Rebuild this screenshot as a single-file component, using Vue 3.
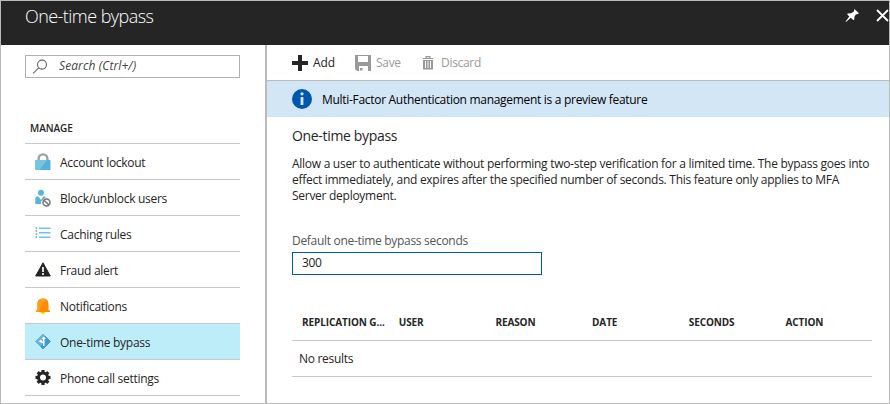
<script setup>
import { ref } from 'vue'

const seconds = ref('300')
const items = [
  { label: 'Account lockout', icon: 'lock' },
  { label: 'Block/unblock users', icon: 'block' },
  { label: 'Caching rules', icon: 'list' },
  { label: 'Fraud alert', icon: 'alert' },
  { label: 'Notifications', icon: 'bell' },
  { label: 'One-time bypass', icon: 'bypass', active: true },
  { label: 'Phone call settings', icon: 'gear' },
]
const columns = ['REPLICATION G...', 'USER', 'REASON', 'DATE', 'SECONDS', 'ACTION']
const teeth = [0, 45, 90, 135, 180, 225, 270, 315]
</script>

<template>
  <div class="window">
    <header class="titlebar">
      <h1>One-time bypass</h1>
      <div class="controls">
        <svg width="15" height="15" viewBox="0 0 15 15">
          <path d="M9.3 1 14 5.2 12.7 6 10.8 6.5 9.4 8.8 9.2 11.8 8.3 12 5.7 9.7 1 14 .6 13.5 4.3 8.6 2.2 6.3 2.7 5.5 6.2 5.3 8.9 3.5Z" fill="#fff" />
        </svg>
        <svg class="close" width="13" height="13" viewBox="0 0 13 13">
          <path d="M1 1 12 12M12 1 1 12" stroke="#fff" stroke-width="1.8" />
        </svg>
      </div>
    </header>

    <div class="body">
      <aside class="sidebar">
        <label class="search">
          <svg width="16" height="16" viewBox="0 0 16 16" fill="none" stroke="#666" stroke-width="1.1">
            <circle cx="10" cy="5.6" r="4.5" />
            <path d="M6.8 8.8 1 14.4" />
          </svg>
          <span>Search (Ctrl+/)</span>
        </label>
        <h2>MANAGE</h2>
        <nav>
          <a v-for="item in items" :key="item.icon" class="item" :class="{ active: item.active }">
            <svg width="16" height="18" viewBox="0 0 16 18">
              <g v-if="item.icon === 'lock'">
                <path d="M3.6 8V5.8a4.4 4.4 0 0 1 8.8 0V8" fill="none" stroke="#9fa1a2" stroke-width="2.4" />
                <rect x=".3" y="7" width="15.2" height="10" rx=".8" fill="#53b1dc" />
                <path d="M1.1 7H12L4.5 17H1.1a.8.8 0 0 1-.8-.8V7.8a.8.8 0 0 1 .8-.8Z" fill="#75c4e2" />
              </g>
              <g v-else-if="item.icon === 'block'">
                <circle cx="6" cy="3.8" r="3" fill="#59b4d9" />
                <path d="M.3 15V9.4Q.3 7.6 2.2 7.6h1.2L6 11l2.4-3.4h1.4l1 .7L6 12.5V15Z" fill="#59b4d9" />
                <circle cx="11.5" cy="13.6" r="3.5" fill="#fff" stroke="#777" stroke-width="1.5" />
                <path d="m9.1 11.2 4.8 4.8" stroke="#777" stroke-width="1.5" />
              </g>
              <g v-else-if="item.icon === 'list'" stroke="#74c3e6" stroke-width="1.5">
                <path d="M4 3.3h11.5M4 7.8h11.5M4 12.3h11.5" />
                <path d="M1.3 2v12" stroke-width="1.6" stroke-dasharray="2 1" />
              </g>
              <g v-else-if="item.icon === 'alert'">
                <path d="M8 1.8 15.3 15H.7Z" fill="#252525" stroke="#252525" stroke-linejoin="round" />
                <path d="M8 6v5" stroke="#fff" stroke-width="1.7" />
                <circle cx="8" cy="13" r="1.1" fill="#fff" />
              </g>
              <g v-else-if="item.icon === 'bell'">
                <path d="M5.5 14h5Q10.5 17 8 17t-2.5-3Z" fill="#ffca00" />
                <path d="M8 1.5c4.200 0 5.500 2.800 5.500 5.500v5.500L15 14v1H1v-1l1.500-1.500V7C2.500 4.300 3.800 1.500 8 1.500Z" fill="#ff8c00" />
                <path d="M8 1.500c1.700 0 2.700.3 3.600 1L6 9 4 15H1v-1l1.500-1.500V7C2.500 4.300 3.800 1.500 8 1.500Z" fill="#ff9d22" />
              </g>
              <g v-else-if="item.icon === 'bypass'">
                <path d="m8 1 7.500 7.500L8 16 .5 8.500Z" fill="#3e9bcb" stroke="#3e9bcb" stroke-linejoin="round" />
                <path d="M8 1 10 3 5.500 13.500.5 8.500Z" fill="#67b5d9" stroke="#67b5d9" stroke-linejoin="round" />
                <path d="M8.800 13V5M8.800 10 5.500 8" fill="none" stroke="#fff" stroke-width="1.500" />
                <path d="M6.600 6 8.800 3.500 11 6ZM3.600 8.200 6.500 6.500v3.500Z" fill="#fff" />
              </g>
              <g v-else transform="translate(8 8.500)" fill="#252525">
                <rect v-for="a in teeth" :key="a" x="-1.600" y="-7.500" width="3.200" height="4" :transform="`rotate(${a})`" />
                <circle r="4.500" fill="none" stroke="#252525" stroke-width="3" />
              </g>
            </svg>
            <span>{{ item.label }}</span>
          </a>
        </nav>
      </aside>

      <main class="content">
        <div class="toolbar">
          <button class="add">
            <svg width="16" height="16" viewBox="0 0 16 16"><path d="M8 0v16M0 8h16" stroke="#252525" stroke-width="4" /></svg>
            <span>Add</span>
          </button>
          <button class="save" disabled>
            <svg width="16" height="16" viewBox="0 0 16 16">
              <path fill="#999" fill-rule="evenodd" d="M0 0h16v16h-3v-5H4v5H2L0 14ZM3 1v6h10V1Z" />
              <path fill="#999" d="M5 13h2.500v2.500H5Z" />
            </svg>
            <span>Save</span>
          </button>
          <button class="discard" disabled>
            <svg width="12" height="14" viewBox="0 0 12 14">
              <path d="M.5 2.500h11M4 2V.7h4V2" fill="none" stroke="#999" stroke-width="1.200" />
              <path d="M1 4h10v9.500H1Z" fill="#999" />
              <path d="M3.500 5v7M6 5v7M8.500 5v7" stroke="#fff" stroke-width=".9" />
            </svg>
            <span>Discard</span>
          </button>
        </div>
        <div class="banner">
          <svg width="20" height="20" viewBox="0 0 20 20">
            <circle cx="10" cy="10" r="10" fill="#0058ad" />
            <circle cx="10" cy="4.800" r="1.600" fill="#d3e6f6" />
            <path d="M10 8v8" stroke="#d3e6f6" stroke-width="2.800" />
          </svg>
          <span>Multi-Factor Authentication management is a preview feature</span>
        </div>
        <section class="details">
          <h3>One-time bypass</h3>
          <p>
            Allow a user to authenticate without performing two-step verification for a limited time. The bypass goes into<br>
            effect immediately, and expires after the specified number of seconds. This feature only applies to MFA<br>
            Server deployment.
          </p>
          <label class="field">
            <span>Default one-time bypass seconds</span>
            <input v-model="seconds" type="text">
          </label>
          <div class="table">
            <div class="thead">
              <span v-for="c in columns" :key="c">{{ c }}</span>
            </div>
            <div class="empty">No results</div>
          </div>
        </section>
      </main>
    </div>
  </div>
</template>

<style>
body { background: #fff; }
</style>

<style scoped>
* { box-sizing: border-box; }
.window {
  width: 890px; height: 404px;
  display: flex; flex-direction: column;
  border: 1px solid #bababa;
  font: 12px/16px "Open Sans", "Noto Sans", sans-serif;
  letter-spacing: -0.3px;
  color: #252525; background: #fff; overflow: hidden; white-space: nowrap;
}
h1, h2, h3, p { margin: 0; font-weight: 400; }
svg { display: block; flex: none; }
.titlebar { height: 44px; flex: none; background: #252525; display: flex; justify-content: space-between; padding: 0 0 0 24px; }
h1 { color: #fff; font-size: 18px; line-height: 30px; font-weight: 300; letter-spacing: -0.55px; }
.controls { display: flex; gap: 16px; padding-top: 7px; }
.close { margin-top: 1px; }
.body { flex: 1; display: flex; min-height: 0; }
.sidebar { width: 266px; border-right: 2px solid #bababa; padding: 10px 25px 0 24px; }
.search { height: 23px; border: 1px solid #b0b0b0; display: flex; align-items: center; padding-left: 6px; gap: 11px; color: #444; font-style: italic; letter-spacing: 0.1px; }
.search span { padding-bottom: 1px; }
h2 { font-size: 10px; font-weight: 600; line-height: 16px; letter-spacing: -0.05px; padding: 42px 0 0 5px; height: 66px; border-bottom: 1px solid #c8c8c8; }
.item { display: flex; align-items: center; gap: 9px; height: 36px; padding-left: 10px; border-bottom: 1px solid #c8c8c8; letter-spacing: -0.28px; }
.item span { padding-top: 3px; }
.item.active { background: #bdedf9; }
.content { flex: 1; min-width: 0; }
.toolbar { height: 36px; border-bottom: 1px solid #bababa; display: flex; padding: 0 0 0 25px; align-items: center; }
button { font: inherit; color: inherit; letter-spacing: inherit; border: 0; background: none; padding: 0; display: flex; align-items: center; gap: 5px; }
button:disabled { color: #999; }
.add { width: 63px; letter-spacing: -0.1px; }
.save { width: 67px; }
.discard { gap: 7px; }
.banner { height: 36px; background: #d3e6f6; display: flex; align-items: center; gap: 10px; padding-left: 25px; color: #000; }
.banner span { padding-top: 2px; }
.details { padding: 9px 17px 0 25px; }
h3 { font-size: 14px; line-height: 20px; letter-spacing: -0.33px; }
p { margin-top: 10px; height: 48px; letter-spacing: -0.275px; }
.field { display: flex; flex-direction: column; margin-top: 29px; color: #555; }
input { font: inherit; letter-spacing: inherit; width: 250px; height: 23px; border: 1px solid #0058ad; padding: 0 9px 2px; margin-top: 3px; color: #252525; outline: 0; background: #fff; }
.table { margin-top: 29px; }
.thead { height: 37px; display: grid; grid-template-columns: repeat(6, 96.7px); padding-left: 10px; align-items: center; border-bottom: 1px solid #c8c8c8; font-size: 10px; font-weight: 700; letter-spacing: -0.1px; }
.empty { height: 36px; display: flex; align-items: center; padding-left: 7px; border-bottom: 1px solid #c8c8c8; }
</style>
